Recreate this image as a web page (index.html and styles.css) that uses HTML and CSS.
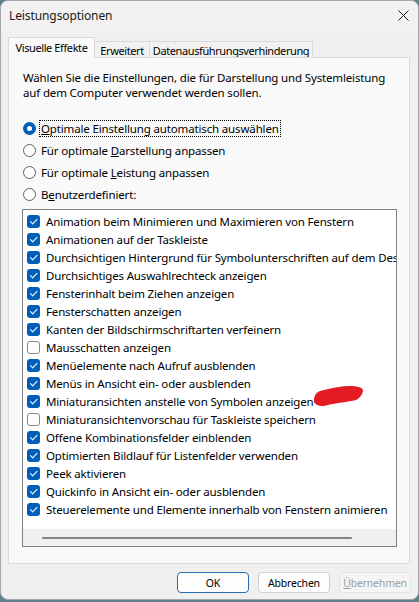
FILE: index.html
```html
<!DOCTYPE html>
<html lang="de">
<head>
<meta charset="utf-8">
<title>Leistungsoptionen</title>
<link rel="stylesheet" href="styles.css">
</head>
<body>
<div class="window">
  <div class="titlebar">
    <span class="title">Leistungsoptionen</span>
    <svg class="close" width="11" height="11" viewBox="0 0 11 11"><path d="M0.5 0.5 L10.5 10.5 M10.5 0.5 L0.5 10.5" stroke="#1a1a1a" stroke-width="1" fill="none"/></svg>
  </div>
  <div class="body">
    <div class="tabs">
      <div class="tab active">Visuelle Effekte</div>
      <div class="tab tab-erw">Erweitert</div>
      <div class="tab tab-dep">Datenausführungsverhinderung</div>
    </div>
    <div class="panel">
      <p class="intro">Wählen Sie die Einstellungen, die für Darstellung und Systemleistung<br>auf dem Computer verwendet werden sollen.</p>
      <div class="radios">
        <div class="radio-row"><span class="radio on"></span><span class="rlabel focus"><u>O</u>ptimale Einstellung automatisch auswählen</span></div>
        <div class="radio-row"><span class="radio"></span><span class="rlabel">Für optimale <u>D</u>arstellung anpassen</span></div>
        <div class="radio-row"><span class="radio"></span><span class="rlabel">Für optimale <u>L</u>eistung anpassen</span></div>
        <div class="radio-row"><span class="radio"></span><span class="rlabel">B<u>e</u>nutzerdefiniert:</span></div>
      </div>
      <div class="list">
        <div class="items">
          <div class="item"><span class="cb"></span><span class="txt">Animation beim Minimieren und Maximieren von Fenstern</span></div>
          <div class="item"><span class="cb"></span><span class="txt">Animationen auf der Taskleiste</span></div>
          <div class="item"><span class="cb"></span><span class="txt">Durchsichtigen Hintergrund für Symbolunterschriften auf dem Desktop verwenden</span></div>
          <div class="item"><span class="cb"></span><span class="txt">Durchsichtiges Auswahlrechteck anzeigen</span></div>
          <div class="item"><span class="cb"></span><span class="txt">Fensterinhalt beim Ziehen anzeigen</span></div>
          <div class="item"><span class="cb"></span><span class="txt">Fensterschatten anzeigen</span></div>
          <div class="item"><span class="cb"></span><span class="txt">Kanten der Bildschirmschriftarten verfeinern</span></div>
          <div class="item"><span class="cb off"></span><span class="txt">Mausschatten anzeigen</span></div>
          <div class="item"><span class="cb"></span><span class="txt">Menüelemente nach Aufruf ausblenden</span></div>
          <div class="item"><span class="cb"></span><span class="txt">Menüs in Ansicht ein- oder ausblenden</span></div>
          <div class="item"><span class="cb"></span><span class="txt">Miniaturansichten anstelle von Symbolen anzeigen</span></div>
          <div class="item"><span class="cb off"></span><span class="txt">Miniaturansichtenvorschau für Taskleiste speichern</span></div>
          <div class="item"><span class="cb"></span><span class="txt">Offene Kombinationsfelder einblenden</span></div>
          <div class="item"><span class="cb"></span><span class="txt">Optimierten Bildlauf für Listenfelder verwenden</span></div>
          <div class="item"><span class="cb"></span><span class="txt">Peek aktivieren</span></div>
          <div class="item"><span class="cb"></span><span class="txt">Quickinfo in Ansicht ein- oder ausblenden</span></div>
          <div class="item"><span class="cb"></span><span class="txt">Steuerelemente und Elemente innerhalb von Fenstern animieren</span></div>
        </div>
        <div class="hscroll"><div class="thumb"></div></div>
        <svg class="scribble" width="50" height="21" viewBox="0 0 50 21"><path d="M0,13 C1,7 4,5 10,4 C18,2 28,0 36,0 C42,0 48,1 49,4 C49,8 46,12 42,14 C34,16 22,17 14,19 C8,21 2,20 0,16 Z" fill="#e31b23"/></svg>
      </div>
    </div>
    <div class="buttons">
      <button class="btn default">OK</button>
      <button class="btn">Abbrechen</button>
      <button class="btn disabled"><u>Ü</u>bernehmen</button>
    </div>
  </div>
</div>
</body>
</html>
```
FILE: styles.css
```css
html, body {
  margin: 0;
  padding: 0;
}
body {
  background: #60808c;
  font-family: "Noto Sans", "Open Sans", sans-serif;
  font-size: 11.5px;
  letter-spacing: -0.15px;
  color: #000;
}
.window {
  width: 419px;
  height: 600px;
  box-sizing: border-box;
  border: 1px solid #a3a9ad;
  border-radius: 8px;
  background: #f0f0f0;
  overflow: hidden;
  display: flex;
  flex-direction: column;
}
.titlebar {
  height: 29px;
  display: flex;
  align-items: center;
  justify-content: space-between;
  padding: 0 9px 0 8px;
  background: #f2f2f2;
}
.title {
  font-size: 12px;
  letter-spacing: -0.1px;
  color: #1a1a1a;
}
.close {
  display: block;
}
.body {
  padding: 8px 8px 0 7px;
  display: flex;
  flex-direction: column;
}
.tabs {
  display: flex;
  align-items: flex-end;
  height: 20px;
}
.tab {
  box-sizing: border-box;
  border: 1px solid #d9d9d9;
  border-bottom: none;
  height: 17px;
  background: #f2f2f2;
  text-align: center;
  font-size: 11px;
  letter-spacing: -0.4px;
  line-height: 17px;
  white-space: nowrap;
  margin-left: -1px;
}
.tab.active {
  margin-left: 0;
  width: 87px;
  height: 21px;
  line-height: 20px;
  background: #f9f9f9;
  position: relative;
  z-index: 1;
}
.tab-erw {
  width: 56px;
}
.tab-dep {
  width: 164px;
}
.panel {
  margin-top: -1px;
  width: 402px;
  height: 507px;
  box-sizing: border-box;
  border: 1px solid #d9d9d9;
  background: #f9f9f9;
  padding: 12px 0 0 14px;
}
.intro {
  margin: 0;
  line-height: 15px;
}
.radios {
  margin-top: 17px;
  display: flex;
  flex-direction: column;
}
.radio-row {
  height: 22px;
  display: flex;
  align-items: center;
  gap: 3px;
}
.radio {
  width: 13px;
  height: 13px;
  box-sizing: border-box;
  border-radius: 50%;
  border: 1px solid #5f5f5f;
  background: #fff;
  flex: none;
}
.radio.on {
  border: 4px solid #005fb8;
  background: #fff;
}
.rlabel {
  line-height: 15px;
  padding: 0 1px;
  border: 1px dotted transparent;
}
.rlabel.focus {
  border-color: #000;
}
.list {
  position: relative;
  margin-top: 4px;
  margin-left: -1px;
  width: 375px;
  height: 338px;
  box-sizing: border-box;
  border: 1px solid #828282;
  background: #fff;
  display: flex;
  flex-direction: column;
}
.items {
  flex: 1;
  overflow: hidden;
  padding-top: 2px;
}
.item {
  height: 18px;
  display: flex;
  align-items: center;
  gap: 6px;
  padding-left: 4px;
  white-space: nowrap;
}
.cb {
  position: relative;
  flex: none;
  width: 13px;
  height: 13px;
  box-sizing: border-box;
  border-radius: 3px;
  background: #005fb8;
}
.cb::after {
  content: "";
  position: absolute;
  left: 4.5px;
  top: 2px;
  width: 2.5px;
  height: 5.5px;
  border: solid #fff;
  border-width: 0 1.2px 1.2px 0;
  transform: rotate(45deg);
}
.cb.off {
  background: #fff;
  border: 1px solid #8a8a8a;
}
.cb.off::after {
  display: none;
}
.hscroll {
  height: 17px;
  background: #f0f0f0;
  display: flex;
  align-items: center;
  padding-left: 19px;
}
.thumb {
  width: 310px;
  height: 2px;
  border-radius: 1px;
  background: #858585;
}
.scribble {
  position: absolute;
  left: 291px;
  top: 176px;
}
.buttons {
  margin-top: 8px;
  display: flex;
  justify-content: flex-end;
  gap: 9px;
  margin-right: -1px;
}
.btn {
  width: 72px;
  height: 21px;
  box-sizing: border-box;
  border: 1px solid #d0d0d0;
  border-radius: 4px;
  background: #fdfdfd;
  font-family: inherit;
  font-size: 10.5px;
  letter-spacing: -0.2px;
  color: #000;
  padding: 0;
}
.btn.default {
  border-color: #2b6cab;
}
.btn.disabled {
  background: #f5f5f5;
  border-color: #e3e3e3;
  color: #a0a0a0;
}
u {
  text-decoration: underline;
  text-underline-offset: 1px;
}
```
